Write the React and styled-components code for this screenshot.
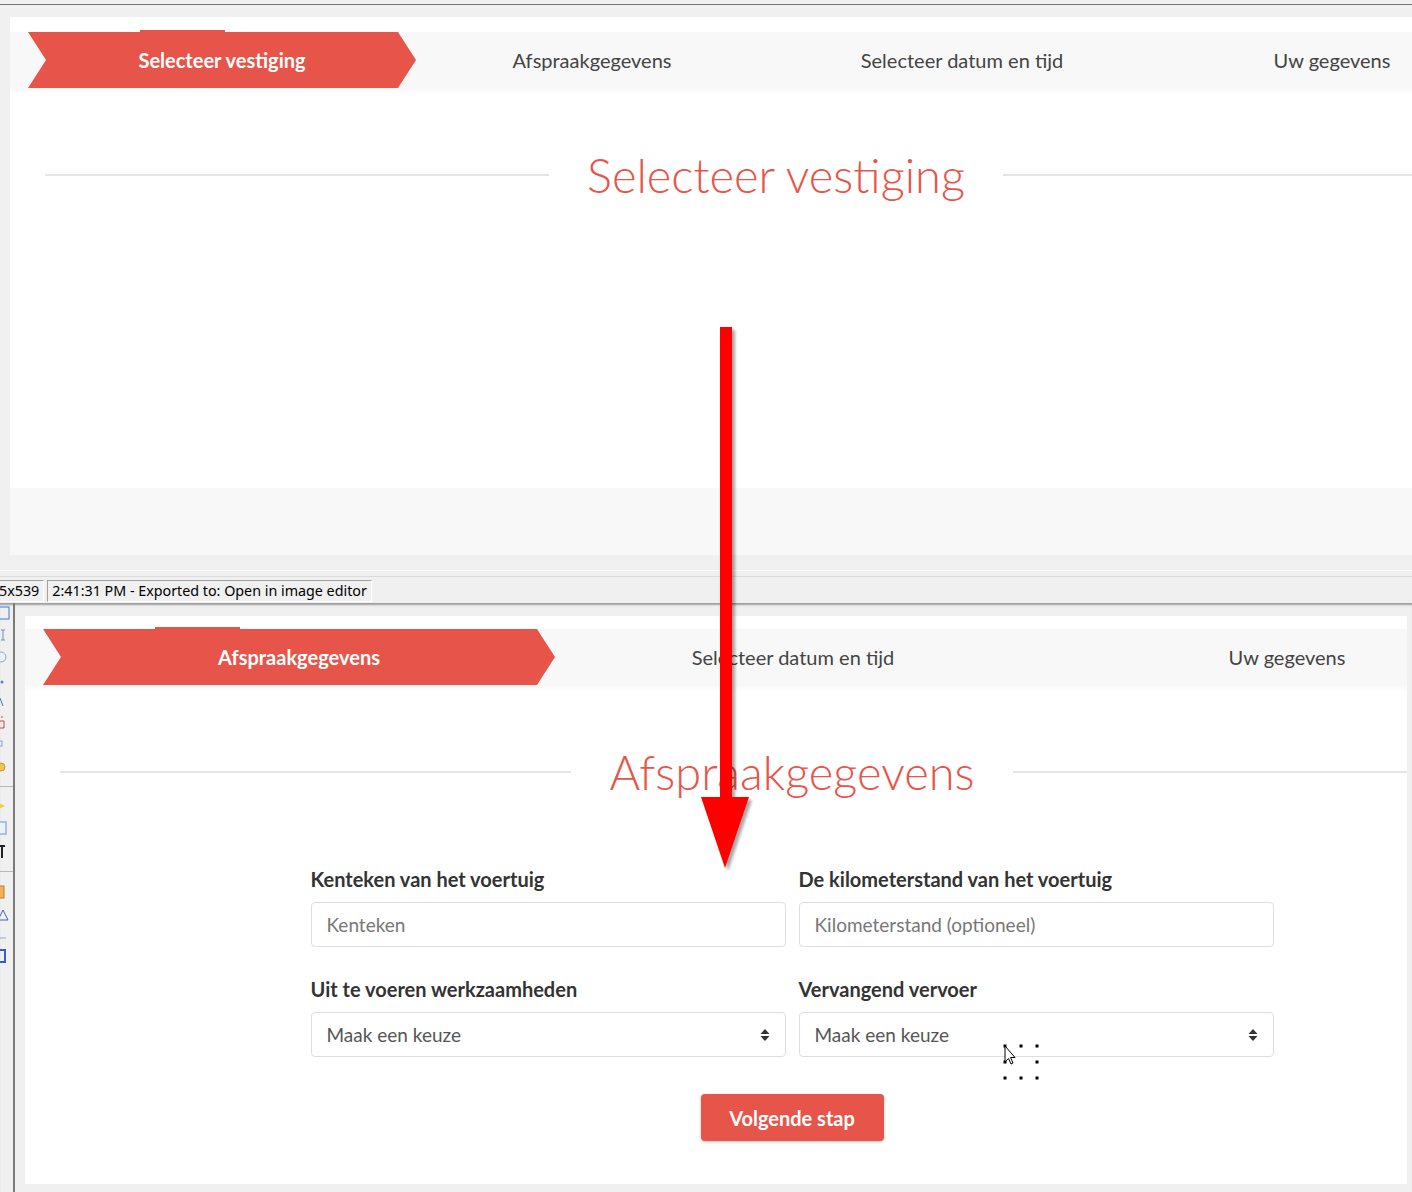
import React from 'react';
import styled, { createGlobalStyle } from 'styled-components';

const RED = '#e7554a';

const GlobalStyle = createGlobalStyle`
  html, body {
    margin: 0;
    padding: 0;
    background: #f0f0f0;
    overflow: hidden;
  }
  * {
    box-sizing: border-box;
  }
`;

const Screen = styled.div`
  position: relative;
  width: 1412px;
  height: 1192px;
  overflow: hidden;
  background: #f0f0f0;
  font-family: Lato, 'Open Sans', sans-serif;
`;

/* ---------- editor chrome ---------- */

const TopEdge = styled.div`
  margin-top: 4px;
  height: 13px;
  border-top: 1px solid #767676;
  background: #f0f0f0;
`;

const WindowBody = styled.div`
  display: flex;
  height: ${(p) => p.$height}px;
  padding-left: ${(p) => p.$left}px;
`;

const Viewport = styled.div`
  flex: 1;
  overflow: hidden;
  display: flex;
  flex-direction: column;
  align-items: flex-start;
`;

const Divider = styled.div`
  height: 21px;
  padding-top: 15px;
`;

const DividerLine = styled.div`
  height: 1px;
  background: #dcdcdc;
  border-bottom: 1px solid #fafafa;
`;

const StatusBar = styled.div`
  height: 27px;
  display: flex;
  align-items: center;
  gap: 3px;
  padding-top: 1px;
  border-top: 1px solid #dadada;
  background: #f0f0f0;
  font-family: 'Noto Sans', 'Liberation Sans', sans-serif;
  font-size: 14.3px;
  color: #000;
`;

const StatusPanel = styled.div`
  height: 22px;
  display: flex;
  align-items: center;
  padding: 0 4px;
  border-top: 1px solid #a0a0a0;
  border-left: 1px solid #a0a0a0;
  border-bottom: 1px solid #ffffff;
  border-right: 1px solid #ffffff;
  margin-left: ${(p) => p.$shift || 0}px;
  white-space: nowrap;
`;

const LowerWindow = styled.div`
  height: 589px;
  display: flex;
  flex-direction: column;
  box-shadow: inset 0 3px 2px -1px rgba(0, 0, 0, 0.35);
`;

const LowerInner = styled.div`
  flex: 1;
  display: flex;
  min-height: 0;
`;

const ToolStrip = styled.div`
  width: 15px;
  border-right: 2px solid #7b7b7b;
  display: flex;
  flex-direction: column;
  align-items: flex-start;
  gap: 8px;
  padding-top: 3px;
  overflow: hidden;
`;

const ToolSep = styled.div`
  width: 13px;
  height: 1px;
  background: #b8b8b8;
  margin: 4px 0;
`;

const CanvasArea = styled.div`
  flex: 1;
  display: flex;
  padding: 13px 5px 8px 10px;
  min-width: 0;
`;

/* ---------- booking page ---------- */

const Page = styled.div`
  flex: none;
  width: ${(p) => p.$width}px;
  height: 100%;
  background: #fff;
  display: flex;
  flex-direction: column;
  padding-top: ${(p) => p.$top}px;
`;

const StepBar = styled.div`
  display: flex;
  height: 56px;
  padding: 0 34px 0 18px;
  background: #f8f8f8;
  box-shadow: 0 3px 6px rgba(0, 0, 0, 0.035);
`;

const Step = styled.div`
  position: relative;
  flex: 1;
  display: flex;
  align-items: center;
  justify-content: center;
  padding-left: 18px;
  font-size: 20px;
  color: ${(p) => (p.$active ? '#fff' : '#444')};
  font-weight: ${(p) => (p.$active ? 700 : 400)};
  z-index: ${(p) => (p.$active ? 1 : 0)};

  &::before {
    content: ${(p) => (p.$active ? "''" : 'none')};
    position: absolute;
    top: 0;
    bottom: 0;
    left: 0;
    right: -18px;
    background: ${RED};
    clip-path: polygon(0 0, calc(100% - 18px) 0, 100% 50%, calc(100% - 18px) 100%, 0 100%, 18px 50%);
  }
`;

const StepLabel = styled.span`
  position: relative;
`;

const StepTab = styled.span`
  position: absolute;
  top: -2px;
  left: 112px;
  width: 85px;
  height: 2px;
  background: ${RED};
`;

const HeadingRow = styled.div`
  display: flex;
  align-items: center;
  gap: 38px;
  margin-top: 59px;
  padding: 0 35px;
`;

const Rule = styled.div`
  flex: 1;
  height: 2px;
  background: #e6e6e6;
`;

const Title = styled.h1`
  margin: 0;
  font-size: 47px;
  line-height: 56px;
  font-weight: 300;
  color: ${RED};
  white-space: nowrap;
`;

const Spacer = styled.div`
  flex: 1;
`;

const PageFoot = styled.div`
  height: 67px;
  background: #f8f8f8;
`;

const Form = styled.form`
  width: 963px;
  margin: 68px auto 0;
  display: flex;
  flex-direction: column;
  align-items: center;
`;

const FieldGrid = styled.div`
  width: 100%;
  display: grid;
  grid-template-columns: 475px 475px;
  column-gap: 13px;
  row-gap: 31px;
`;

const Field = styled.div`
  display: flex;
  flex-direction: column;
`;

const Label = styled.label`
  font-size: 20px;
  line-height: 23px;
  font-weight: 700;
  color: #333;
  margin-bottom: 11px;
`;

const Box = styled.div`
  height: 45px;
  display: flex;
  align-items: center;
  justify-content: space-between;
  padding: 0 15px;
  border: 1px solid #dedede;
  border-radius: 4px;
  font-size: 19px;
  color: ${(p) => (p.$placeholder ? '#777' : '#555')};
`;

const Arrows = styled.svg`
  width: 10px;
  height: 14px;
`;

const NextButton = styled.button`
  margin-top: 37px;
  width: 183px;
  height: 47px;
  border: none;
  border-radius: 4px;
  background: ${RED};
  color: #fff;
  font-family: Lato, 'Open Sans', sans-serif;
  font-size: 20px;
  font-weight: 700;
  box-shadow: 0 1px 3px rgba(0, 0, 0, 0.25);
`;

/* ---------- annotation layer ---------- */

const Overlay = styled.svg`
  position: absolute;
  left: 0;
  top: 0;
  pointer-events: none;
`;

const topSteps = ['Selecteer vestiging', 'Afspraakgegevens', 'Selecteer datum en tijd', 'Uw gegevens'];
const lowerSteps = ['Afspraakgegevens', 'Selecteer datum en tijd', 'Uw gegevens'];

const Steps = ({ items }) => (
  <StepBar>
    {items.map((label, i) => (
      <Step key={label} $active={i === 0}>
        {i === 0 && <StepTab />}
        <StepLabel>{label}</StepLabel>
      </Step>
    ))}
  </StepBar>
);

const Heading = ({ children }) => (
  <HeadingRow>
    <Rule />
    <Title>{children}</Title>
    <Rule />
  </HeadingRow>
);

const UpDown = () => (
  <Arrows viewBox="0 0 10 14">
    <path d="M5 1 L9.5 6 H0.5 Z" fill="#333" />
    <path d="M5 13 L9.5 8 H0.5 Z" fill="#333" />
  </Arrows>
);

const toolIcons = [
  <svg key="a" width="14" height="14"><rect x="-4" y="1" width="13" height="12" fill="none" stroke="#3a7bd5" /></svg>,
  <svg key="b" width="14" height="14"><path d="M3 2 V12 M1 2 H5 M1 12 H5" stroke="#6a8fc8" fill="none" /></svg>,
  <svg key="c" width="14" height="14"><circle cx="1" cy="7" r="5" fill="none" stroke="#8fa9d6" /></svg>,
  <svg key="d" width="14" height="14"><circle cx="2" cy="10" r="1.5" fill="#5a7fc0" /></svg>,
  <svg key="e" width="14" height="14"><path d="M0 4 L3 12" stroke="#4d6fb5" /></svg>,
  <svg key="f" width="14" height="14"><path d="M1 1 h2 M0 5 h4 v7 h-4" stroke="#d04040" fill="none" /></svg>,
  <svg key="g" width="14" height="14"><rect x="-3" y="3" width="5" height="5" fill="none" stroke="#7fa2d8" /></svg>,
  <svg key="h" width="14" height="14"><circle cx="1" cy="7" r="4" fill="#f2c35a" stroke="#c99b2e" /></svg>,
];

const toolIcons2 = [
  <svg key="i" width="14" height="14"><path d="M-3 3 L5 7 L-3 11 Z" fill="#f0d23a" /></svg>,
  <svg key="j" width="14" height="14"><rect x="-4" y="1" width="10" height="12" fill="#eaf2fb" stroke="#6a94c8" /></svg>,
  <svg key="k" width="14" height="16"><path d="M-1 3 H5 M2 3 V15" stroke="#222" strokeWidth="2" /></svg>,
];

const toolIcons3 = [
  <svg key="l" width="14" height="16"><rect x="-4" y="2" width="8" height="12" fill="#f3b25a" stroke="#c27a22" /></svg>,
  <svg key="m" width="14" height="14"><path d="M-2 12 L3 2 L8 12 Z" fill="none" stroke="#3b63c4" /></svg>,
  <svg key="n" width="14" height="10"><path d="M-2 8 H6" stroke="#8da7d6" /></svg>,
  <svg key="o" width="14" height="16"><path d="M0 2 H5 V14 H0" fill="none" stroke="#2f5fd0" strokeWidth="2" /></svg>,
];

const dots = [];
[1005, 1021, 1037].forEach((x) =>
  [1046, 1062, 1078].forEach((y) => {
    if (!(x === 1021 && y === 1062)) dots.push([x, y]);
  })
);

const App = () => (
  <Screen>
    <GlobalStyle />

    <TopEdge />
    <WindowBody $height={538} $left={10}>
      <Viewport>
        <Page $width={1532} $top={15}>
          <Steps items={topSteps} />
          <Heading>Selecteer vestiging</Heading>
          <Spacer />
          <PageFoot />
        </Page>
      </Viewport>
    </WindowBody>

    <Divider>
      <DividerLine />
    </Divider>

    <StatusBar>
      <StatusPanel $shift={-6}>5x539</StatusPanel>
      <StatusPanel>2:41:31 PM - Exported to: Open in image editor</StatusPanel>
    </StatusBar>

    <LowerWindow>
      <LowerInner>
        <ToolStrip>
          {toolIcons}
          <ToolSep />
          {toolIcons2}
          <ToolSep />
          {toolIcons3}
        </ToolStrip>
        <CanvasArea>
          <Viewport>
            <Page $width={1534} $top={13}>
              <Steps items={lowerSteps} />
              <Heading>Afspraakgegevens</Heading>
              <Form onSubmit={(e) => e.preventDefault()}>
                <FieldGrid>
                  <Field>
                    <Label>Kenteken van het voertuig</Label>
                    <Box $placeholder>Kenteken</Box>
                  </Field>
                  <Field>
                    <Label>De kilometerstand van het voertuig</Label>
                    <Box $placeholder>Kilometerstand (optioneel)</Box>
                  </Field>
                  <Field>
                    <Label>Uit te voeren werkzaamheden</Label>
                    <Box>
                      Maak een keuze
                      <UpDown />
                    </Box>
                  </Field>
                  <Field>
                    <Label>Vervangend vervoer</Label>
                    <Box>
                      Maak een keuze
                      <UpDown />
                    </Box>
                  </Field>
                </FieldGrid>
                <NextButton type="submit">Volgende stap</NextButton>
              </Form>
            </Page>
          </Viewport>
        </CanvasArea>
      </LowerInner>
    </LowerWindow>

    {/* red annotation arrow */}
    <Overlay width="1412" height="1192" viewBox="0 0 1412 1192">
      <defs>
        <filter id="arrowShadow" x="-20%" y="-5%" width="140%" height="110%">
          <feDropShadow dx="3" dy="3" stdDeviation="1.5" floodColor="#000" floodOpacity="0.35" />
        </filter>
      </defs>
      <g filter="url(#arrowShadow)">
        <path d="M720 327 H732 V797 H749 L725 868 L701 797 H720 Z" fill="#ff0000" />
      </g>

      {/* selection handles and pointer */}
      {dots.map(([x, y]) => (
        <rect key={`${x}-${y}`} x={x - 1.5} y={y - 1.5} width="3" height="3" fill="#000" />
      ))}
      <path
        d="M1005 1046 L1005 1062 L1008.5 1058.5 L1011 1064 L1013 1063 L1010.5 1057.5 L1015 1057.5 Z"
        fill="#fff"
        stroke="#000"
        strokeWidth="1"
        strokeLinejoin="round"
      />
    </Overlay>
  </Screen>
);

export default App;
